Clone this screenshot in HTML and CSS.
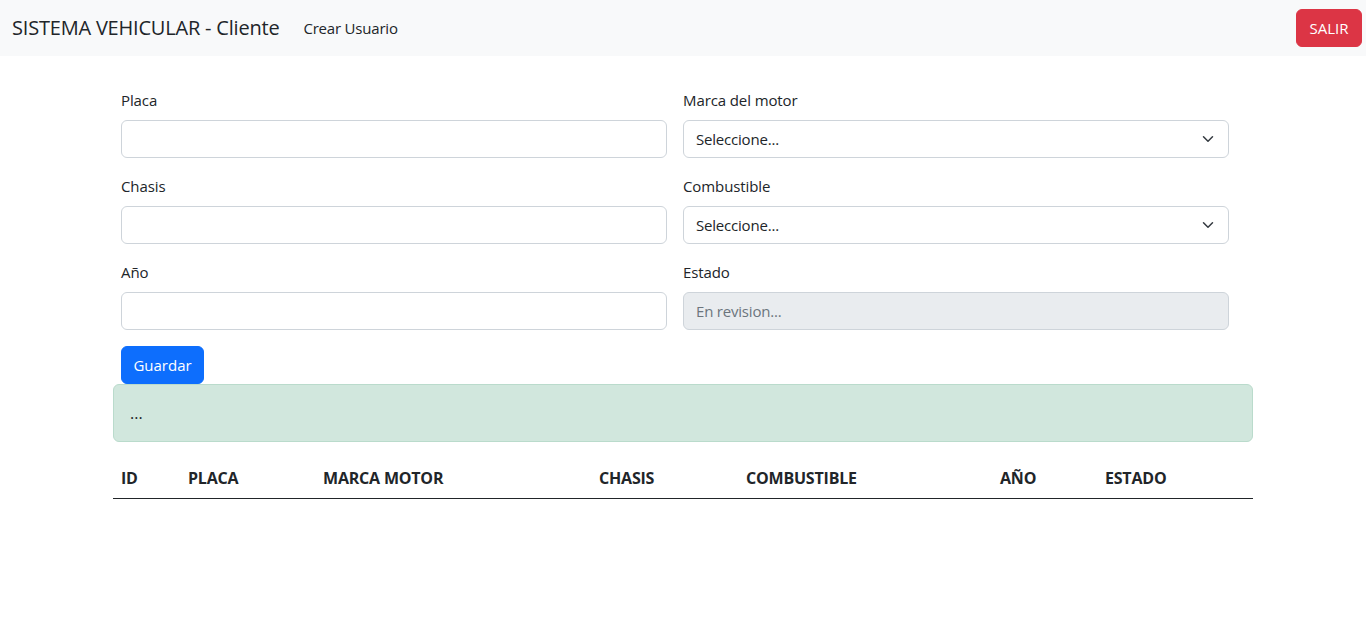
FILE: index.html
```html
<!DOCTYPE html>
<html lang="es">
<head>
<meta charset="utf-8">
<title>Sistema Vehicular</title>
<link rel="stylesheet" href="styles.css">
</head>
<body>
<nav class="navbar">
  <div class="nav-left">
    <span class="brand">SISTEMA VEHICULAR - Cliente</span>
    <a class="nav-link">Crear Usuario</a>
  </div>
  <button class="btn btn-danger">SALIR</button>
</nav>
<main class="container">
  <form class="form-grid">
    <div class="field">
      <label>Placa</label>
      <input class="control" type="text">
    </div>
    <div class="field">
      <label>Marca del motor</label>
      <div class="control select">Seleccione...<svg class="chev" viewBox="0 0 16 16" width="16" height="12"><path d="m2 5 6 6 6-6" fill="none" stroke="#343a40" stroke-width="2" stroke-linecap="round" stroke-linejoin="round"/></svg></div>
    </div>
    <div class="field">
      <label>Chasis</label>
      <input class="control" type="text">
    </div>
    <div class="field">
      <label>Combustible</label>
      <div class="control select">Seleccione...<svg class="chev" viewBox="0 0 16 16" width="16" height="12"><path d="m2 5 6 6 6-6" fill="none" stroke="#343a40" stroke-width="2" stroke-linecap="round" stroke-linejoin="round"/></svg></div>
    </div>
    <div class="field">
      <label>Año</label>
      <input class="control" type="text">
    </div>
    <div class="field">
      <label>Estado</label>
      <div class="control disabled">En revision...</div>
    </div>
    <div class="actions">
      <button type="button" class="btn btn-primary">Guardar</button>
    </div>
  </form>
  <div class="alert">...</div>
  <table class="table">
    <thead>
      <tr>
        <th class="c1">ID</th>
        <th class="c2">PLACA</th>
        <th class="c3">MARCA MOTOR</th>
        <th class="c4">CHASIS</th>
        <th class="c5">COMBUSTIBLE</th>
        <th class="c6">AÑO</th>
        <th class="c7">ESTADO</th>
      </tr>
    </thead>
    <tbody></tbody>
  </table>
</main>
</body>
</html>
```

FILE: styles.css
```css
* { box-sizing: border-box; }
body {
  margin: 0;
  font-family: "Open Sans", "Noto Sans", sans-serif;
  font-size: 16px;
  line-height: 24px;
  color: #212529;
  background: #fff;
}
.navbar {
  height: 56px;
  background: #f8f9fa;
  display: flex;
  align-items: center;
  justify-content: space-between;
  padding: 0 4px 0 12px;
}
.nav-left { display: flex; align-items: center; }
.brand {
  font-size: 20px;
  letter-spacing: -0.2px;
  margin-right: 24px;
}
.nav-link { font-size: 15px; letter-spacing: -0.2px; color: #212529; }
.btn {
  font-family: inherit;
  font-size: 15px;
  line-height: 24px;
  padding: 6px 12px;
  border: 1px solid transparent;
  border-radius: 6px;
  color: #fff;
  cursor: pointer;
}
.btn-danger { background: #dc3545; border-color: #dc3545; width: 66px; height: 38px; padding: 6px 0; }
.btn-primary { background: #0d6efd; border-color: #0d6efd; width: 83px; height: 38px; padding: 6px 0; }
.container {
  width: 1140px;
  margin: 0 auto;
  padding-top: 32px;
}
.form-grid {
  display: grid;
  grid-template-columns: 546px 546px;
  column-gap: 16px;
  row-gap: 16px;
  padding-left: 8px;
  margin: 0;
}
.field { display: flex; flex-direction: column; }
label { font-size: 15px; letter-spacing: -0.1px; margin-bottom: 8px; display: block; line-height: 24px; }
.control {
  height: 38px;
  border: 1px solid #ced4da;
  border-radius: 6px;
  background: #fff;
  padding: 6px 12px;
  font-family: inherit;
  font-size: 15px;
  letter-spacing: -0.2px;
  line-height: 24px;
  color: #212529;
}
.select { display: flex; align-items: center; justify-content: space-between; }
.disabled { background: #e9ecef; color: #6c757d; }
.actions { grid-column: 1 / 3; }
.alert {
  height: 58px;
  background: #d1e7dd;
  border: 1px solid #badbcc;
  border-radius: 6px;
  padding: 16px;
  color: #212529;
  margin-bottom: 16px;
}
.table {
  width: 100%;
  border-collapse: collapse;
  table-layout: fixed;
}
.table th {
  text-align: left;
  font-weight: 700;
  font-size: 16px;
  letter-spacing: -0.2px;
  padding: 8px;
  line-height: 24px;
  border-bottom: 1.5px solid #212529;
}
.c1 { width: 67px; }
.c2 { width: 135px; }
.c3 { width: 276px; }
.c4 { width: 147px; }
.c5 { width: 254px; }
.c6 { width: 105px; }
.c7 { width: 156px; }
```
